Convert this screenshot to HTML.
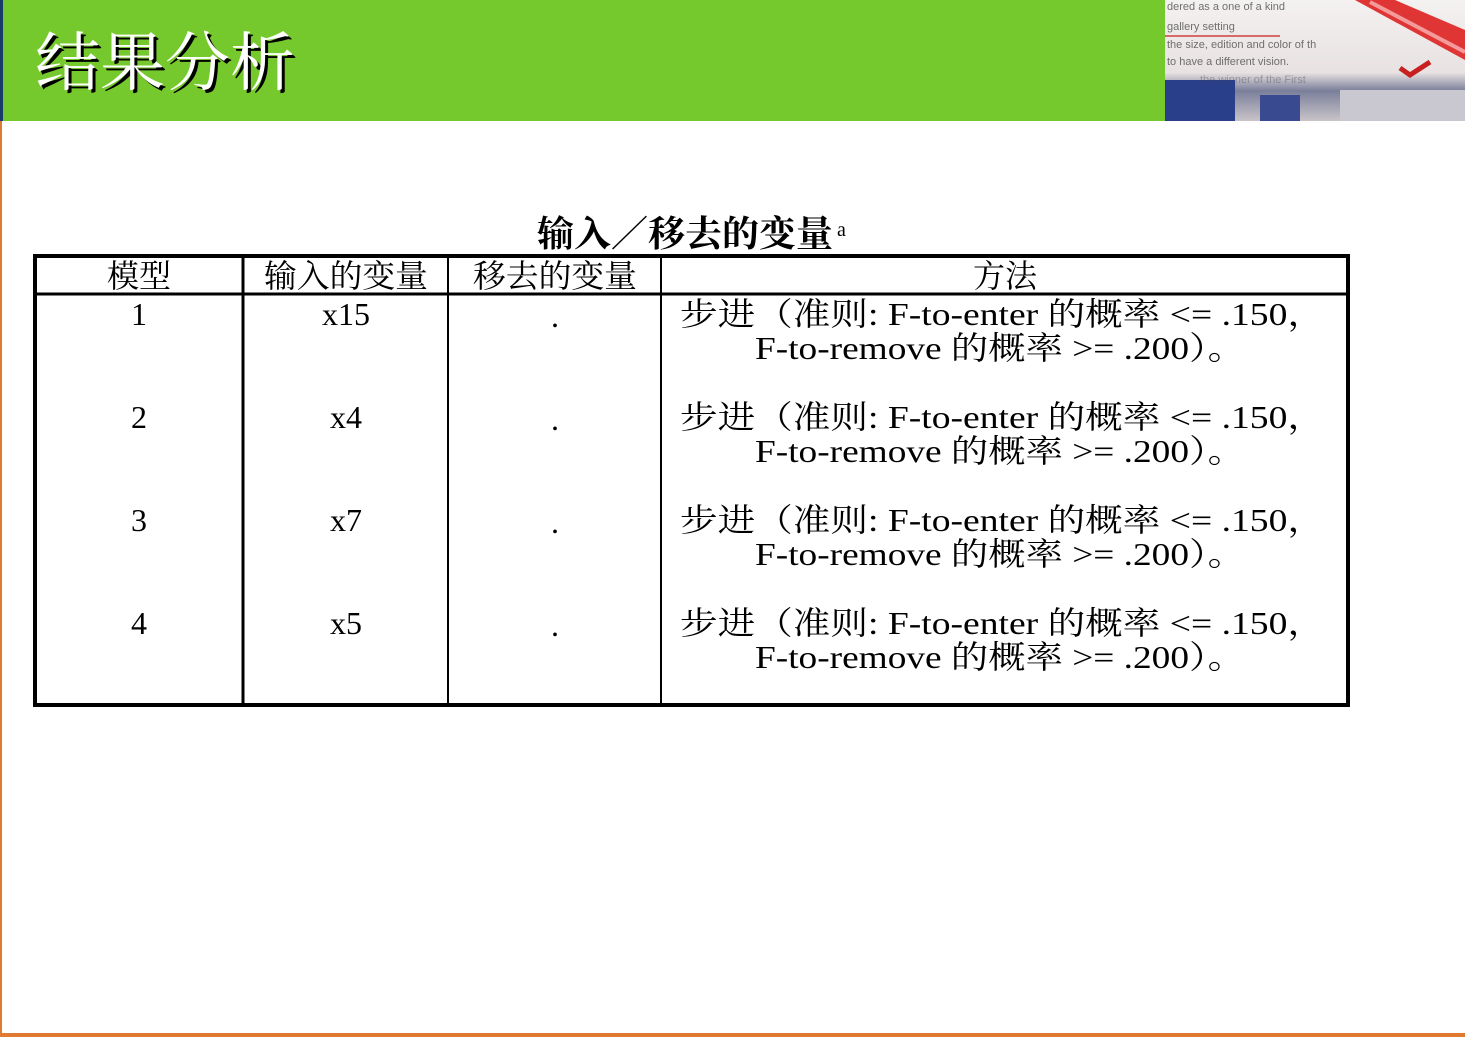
<!DOCTYPE html>
<html><head><meta charset="utf-8"><style>
html,body{margin:0;padding:0;width:1465px;height:1037px;overflow:hidden;background:#fff}
</style></head><body>
<svg width="1465" height="1037" xmlns="http://www.w3.org/2000/svg" style="display:block">
<defs>
<linearGradient id="pg" x1="0" y1="0" x2="0" y2="1">
<stop offset="0" stop-color="#f4f1f1"/><stop offset="0.6" stop-color="#e8e2e2"/><stop offset="0.75" stop-color="#7a7f9a"/><stop offset="1" stop-color="#c9c4c8"/></linearGradient>
</defs>
<rect x="0" y="0" width="1465" height="121" fill="#76c92c"/>
<rect x="0" y="0" width="3" height="121" fill="#1a3a6a"/>
<rect x="0" y="121" width="2" height="916" fill="#e07a30"/>
<rect x="0" y="1033" width="1465" height="4" fill="#e07a30"/>
<!-- photo -->
<rect x="1165" y="0" width="300" height="121" fill="url(#pg)"/>
<rect x="1165" y="80" width="70" height="41" fill="#2a3f8a"/>
<rect x="1260" y="95" width="40" height="26" fill="#3a4a90"/>
<rect x="1340" y="90" width="125" height="31" fill="#c9c7d0"/>
<g font-family="Liberation Sans, sans-serif" font-size="11" fill="#444" opacity="0.75">
<text x="1167" y="10">dered as  a one of a kind</text>
<text x="1167" y="30">gallery setting</text>
<text x="1167" y="48">the size, edition and color of th</text>
<text x="1167" y="65">to have a different vision.</text>
<text x="1200" y="83" opacity="0.5">the winner of the First</text>
</g>
<line x1="1165" y1="36" x2="1280" y2="36" stroke="#d04040" stroke-width="1.5"/>
<path d="M1355 0 L1465 60 L1465 30 L1395 0 Z" fill="#e03535"/>
<path d="M1370 2 L1465 52" stroke="#f49a9a" stroke-width="4"/>
<path d="M1400 68 L1410 75 L1430 62" stroke="#c82020" stroke-width="5" fill="none"/>
<!-- header title -->
<g font-family="Liberation Serif, 'Noto Serif CJK SC', serif" font-size="64">
<text x="38" y="88" fill="#000" textLength="260" lengthAdjust="spacingAndGlyphs">结果分析</text>
<text x="35" y="85" fill="#fff" textLength="260" lengthAdjust="spacingAndGlyphs">结果分析</text>
</g>
<!-- table title -->
<text x="537" y="246" font-family="Liberation Serif, 'Noto Serif CJK SC', serif" font-weight="bold" font-size="36" textLength="296" lengthAdjust="spacingAndGlyphs">输入／移去的变量</text>
<text x="837" y="236" font-family="Liberation Serif, serif" font-size="20">a</text>
<!-- table -->
<rect x="35" y="256" width="1313" height="449" fill="none" stroke="#000" stroke-width="4"/>
<line x1="35" y1="294" x2="1348" y2="294" stroke="#000" stroke-width="3"/>
<line x1="243" y1="256" x2="243" y2="705" stroke="#000" stroke-width="3"/>
<line x1="448" y1="256" x2="448" y2="705" stroke="#000" stroke-width="2"/>
<line x1="661" y1="256" x2="661" y2="705" stroke="#000" stroke-width="2"/>
<g font-family="Liberation Serif, 'Noto Serif CJK SC', serif" font-size="32" fill="#000">
<text x="139" y="287" text-anchor="middle">模型</text>
<text x="264" y="287" textLength="164" lengthAdjust="spacingAndGlyphs">输入的变量</text>
<text x="473" y="287" textLength="164" lengthAdjust="spacingAndGlyphs">移去的变量</text>
<text x="1005" y="287" text-anchor="middle">方法</text>
</g>
<g font-family="Liberation Serif, 'Noto Serif CJK SC', serif" font-size="32" fill="#000">
<text x="139" y="325" text-anchor="middle">1</text><text x="346" y="325" text-anchor="middle" textLength="48" lengthAdjust="spacingAndGlyphs">x15</text><text x="555" y="327" text-anchor="middle">.</text>
<text x="139" y="428" text-anchor="middle">2</text><text x="346" y="428" text-anchor="middle" textLength="32" lengthAdjust="spacingAndGlyphs">x4</text><text x="555" y="430" text-anchor="middle">.</text>
<text x="139" y="531" text-anchor="middle">3</text><text x="346" y="531" text-anchor="middle" textLength="32" lengthAdjust="spacingAndGlyphs">x7</text><text x="555" y="533" text-anchor="middle">.</text>
<text x="139" y="634" text-anchor="middle">4</text><text x="346" y="634" text-anchor="middle" textLength="32" lengthAdjust="spacingAndGlyphs">x5</text><text x="555" y="636" text-anchor="middle">.</text>
</g>
<g font-family="Liberation Serif, 'Noto Serif CJK SC', serif" font-size="32" fill="#000">
<text x="680" y="325" textLength="645" lengthAdjust="spacingAndGlyphs">步进（准则: F-to-enter 的概率 &lt;= .150，</text>
<text x="755" y="359" textLength="490" lengthAdjust="spacingAndGlyphs">F-to-remove 的概率 &gt;= .200）。</text>
<text x="680" y="428" textLength="645" lengthAdjust="spacingAndGlyphs">步进（准则: F-to-enter 的概率 &lt;= .150，</text>
<text x="755" y="462" textLength="490" lengthAdjust="spacingAndGlyphs">F-to-remove 的概率 &gt;= .200）。</text>
<text x="680" y="531" textLength="645" lengthAdjust="spacingAndGlyphs">步进（准则: F-to-enter 的概率 &lt;= .150，</text>
<text x="755" y="565" textLength="490" lengthAdjust="spacingAndGlyphs">F-to-remove 的概率 &gt;= .200）。</text>
<text x="680" y="634" textLength="645" lengthAdjust="spacingAndGlyphs">步进（准则: F-to-enter 的概率 &lt;= .150，</text>
<text x="755" y="668" textLength="490" lengthAdjust="spacingAndGlyphs">F-to-remove 的概率 &gt;= .200）。</text>
</g>
</svg>
</body></html>
